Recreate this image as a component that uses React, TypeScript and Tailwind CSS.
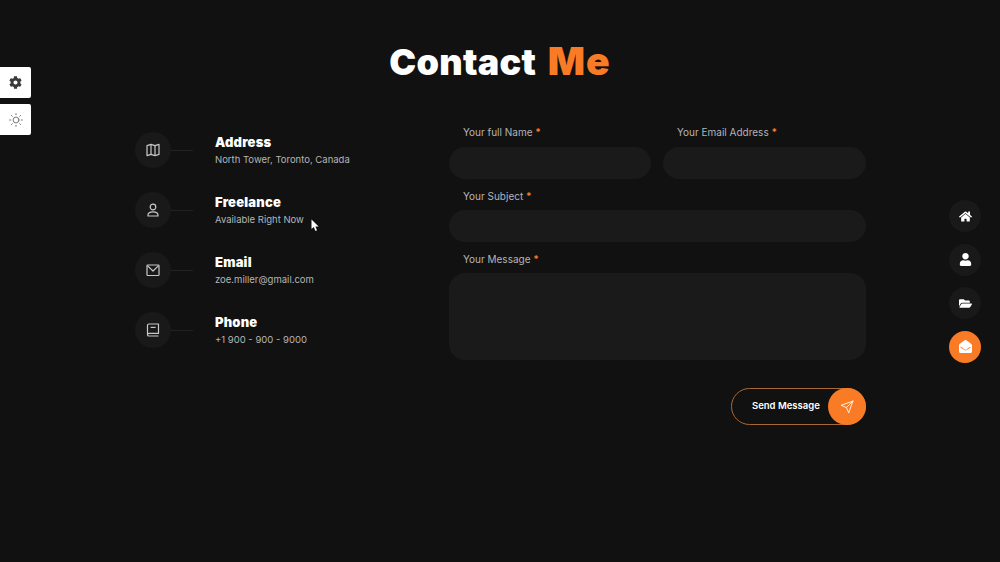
import React from 'react';
import { FaCog, FaEnvelopeOpen, FaFolderOpen, FaHome, FaUser } from 'react-icons/fa';
import { FiSend, FiSun } from 'react-icons/fi';

const MapIcon = () => (
  <svg viewBox="0 0 14 14" className="h-[14px] w-[14px]" fill="none" stroke="currentColor" strokeWidth="1.2" strokeLinejoin="round">
    <path d="M1 2.6 L5 1.4 L9 2.6 L13 1.4 V11.4 L9 12.6 L5 11.4 L1 12.6 Z" />
    <path d="M5 1.4 V11.4 M9 2.6 V12.6" />
  </svg>
);

const UserIcon = () => (
  <svg viewBox="0 0 14 14" className="h-[14px] w-[14px]" fill="none" stroke="currentColor" strokeWidth="1.2" strokeLinecap="round">
    <circle cx="7" cy="4" r="2.8" />
    <path d="M2 13 V12 C2 9.8 3.8 8.8 7 8.8 C10.2 8.8 12 9.8 12 12 V13 H2" />
  </svg>
);

const MailIcon = () => (
  <svg viewBox="0 0 14 14" className="h-[14px] w-[14px]" fill="none" stroke="currentColor" strokeWidth="1.2" strokeLinejoin="round">
    <rect x="1" y="2" width="12" height="10.5" rx="0.8" />
    <path d="M1.4 2.6 L7 8 L12.6 2.6" />
  </svg>
);

const BookIcon = () => (
  <svg viewBox="0 0 14 14" className="h-[14px] w-[14px]" fill="none" stroke="currentColor" strokeWidth="1.2" strokeLinejoin="round">
    <path d="M3 1 H12.5 V10.4 H3 C2 10.4 1.5 11 1.5 11.7 C1.5 12.4 2 13 3 13 H12.5 M1.5 11.7 V2.5 C1.5 1.6 2.1 1 3 1" />
    <path d="M4.6 4.4 H9.6" />
  </svg>
);

const contacts = [
  { icon: MapIcon, title: 'Address', text: 'North Tower, Toronto, Canada' },
  { icon: UserIcon, title: 'Freelance', text: 'Available Right Now' },
  { icon: MailIcon, title: 'Email', text: 'zoe.miller@gmail.com' },
  { icon: BookIcon, title: 'Phone', text: '+1 900 - 900 - 9000' },
];

const nav = [
  { icon: FaHome, active: false },
  { icon: FaUser, active: false },
  { icon: FaFolderOpen, active: false },
  { icon: FaEnvelopeOpen, active: true },
];

const Label = ({ text }: { text: string }) => (
  <label className="block h-[14px] pl-[14px] text-[10px] leading-[14px] text-[#b5b5b5]">
    {text} <span className="font-bold text-[#f57c2a]">*</span>
  </label>
);

const App = () => {
  return (
    <div className="relative h-[562px] w-[1000px] overflow-hidden bg-[#111112] font-['Inter',sans-serif]">
      {/* Settings tabs */}
      <div className="absolute left-0 top-[67px] flex flex-col gap-[6px]">
        <div className="flex h-[31px] w-[31px] items-center justify-center rounded-r-[2px] bg-white text-[#3a3a3a]">
          <FaCog className="h-[13px] w-[13px]" />
        </div>
        <div className="flex h-[31px] w-[31px] items-center justify-center rounded-r-[2px] bg-white text-[#666666]">
          <FiSun className="h-[14px] w-[14px]" strokeWidth={1.5} />
        </div>
      </div>

      {/* Right nav */}
      <div className="absolute left-[949px] top-[200px] flex flex-col gap-[11.67px]">
        {nav.map(({ icon: Icon, active }, i) => (
          <div
            key={i}
            className={`flex h-[32px] w-[32px] items-center justify-center rounded-full text-white ${active ? 'bg-[#f97b25]' : 'bg-[#19191a]'}`}
          >
            <Icon className="h-[13px] w-[13px]" />
          </div>
        ))}
      </div>

      <h1 className="h-[85px] pt-[37px] text-center text-[36px] font-black leading-[48px] tracking-[0.3px] text-white">
        Contact <span className="ml-[4px] text-[39px] tracking-[1px] text-[#f97b25]">Me</span>
      </h1>

      <div className="ml-[135px] mt-[35px] flex w-[731px] items-start">
        {/* Contact details */}
        <div className="flex w-[314px] flex-col">
          {contacts.map(({ icon: Icon, title, text }) => (
            <div key={title} className="flex h-[60px] items-center">
              <div className="flex h-[36px] w-[36px] items-center justify-center rounded-full bg-[#19191a] text-[#c8c8c8]">
                <Icon />
              </div>
              <div className="h-px w-[22px] bg-[#212122]" />
              <div className="ml-[22px] pb-px">
                <div className="text-[13px] font-black leading-[18px] tracking-[0.2px] text-white">{title}</div>
                <div className="mt-[2px] text-[9.5px] leading-[14px] text-[#b5b5b5]">{text}</div>
              </div>
            </div>
          ))}
        </div>

        {/* Form */}
        <form className="flex-1 pt-[5px]">
          <div className="grid grid-cols-[202px_203px] gap-x-[12px]">
            <div>
              <Label text="Your full Name" />
              <div className="mt-[8px] h-[32px] rounded-full bg-[#1a1a1b]" />
            </div>
            <div>
              <Label text="Your Email Address" />
              <div className="mt-[8px] h-[32px] rounded-full bg-[#1a1a1b]" />
            </div>
          </div>
          <div className="mt-[10px]">
            <Label text="Your Subject" />
            <div className="mt-[7px] h-[32px] rounded-full bg-[#1a1a1b]" />
          </div>
          <div className="mt-[10px]">
            <Label text="Your Message" />
            <div className="mt-[7px] h-[87px] rounded-[16px] bg-[#1a1a1b]" />
          </div>
          <div className="mt-[28px] flex justify-end">
            <button
              type="button"
              className="flex h-[37px] w-[135px] items-center rounded-full border border-[#a8693a] pl-[20px]"
            >
              <span className="text-[9.5px] font-semibold text-white">Send Message</span>
            </button>
          </div>
          <div className="relative">
            <div className="absolute -top-[37px] right-0 flex h-[37px] w-[38px] items-center justify-center rounded-full bg-[#f97b25] text-white">
              <FiSend className="h-[14px] w-[14px]" strokeWidth={1.5} />
            </div>
          </div>
        </form>
      </div>

      {/* Mouse pointer in the shot */}
      <svg className="absolute left-[311px] top-[219px] h-[13px] w-[9px]" viewBox="0 0 9 13">
        <path d="M0.5 0.5 L0.5 10 L2.8 8 L4.4 12 L6 11.3 L4.4 7.6 L7.6 7.4 Z" fill="#ffffff" />
      </svg>
    </div>
  );
};

export default App;
